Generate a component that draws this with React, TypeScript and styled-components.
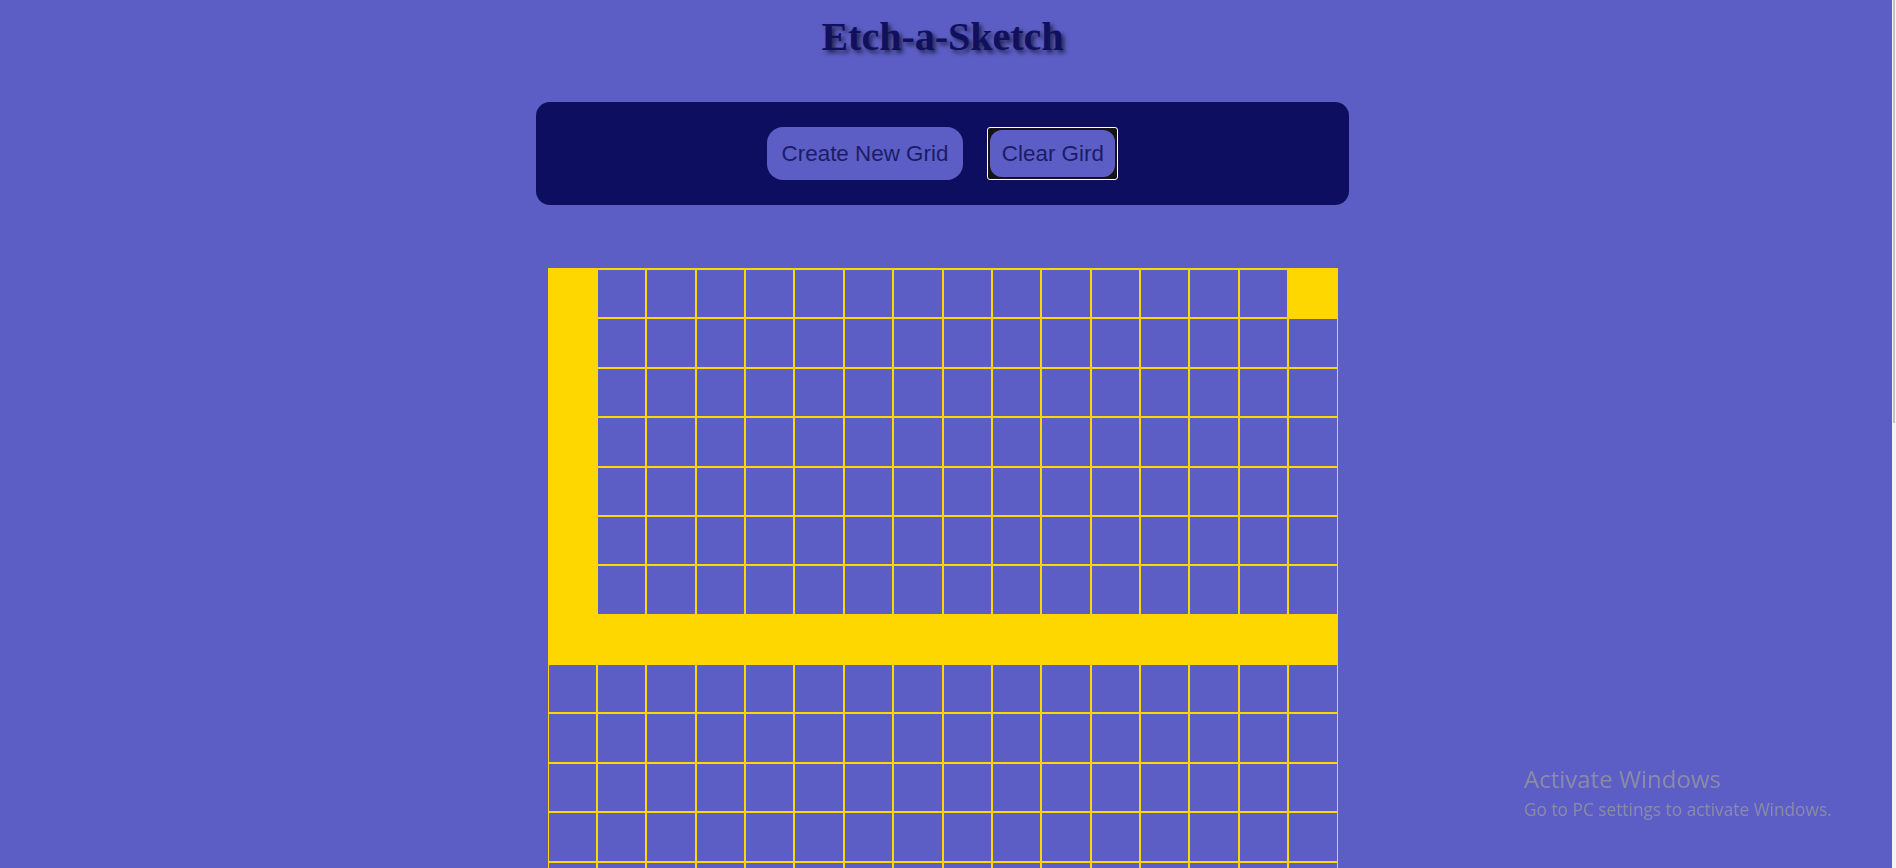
import React from 'react';
import styled, { createGlobalStyle } from 'styled-components';

const GRID_SIZE = 16;

const GlobalStyle = createGlobalStyle`
  html, body {
    margin: 0;
    padding: 0;
    background: #5c5ec6;
    scrollbar-width: none;
  }

  ::-webkit-scrollbar {
    display: none;
  }
`

const Page = styled.div`
  display: flex;
  flex-direction: column;
  align-items: center;
  padding: 13px 11px 0 0;
  min-height: 100vh;
  font-family: "Liberation Sans", Arial, sans-serif;
`

const Title = styled.h1`
  margin: 0 0 41px;
  font-family: "Liberation Serif", "Times New Roman", serif;
  font-size: 40px;
  line-height: 48px;
  font-weight: bold;
  color: #10105e;
  text-shadow: 3px 3px 4px rgba(0, 0, 0, 0.6);
`

const Controls = styled.div`
  display: flex;
  align-items: center;
  justify-content: center;
  gap: 24px;
  width: 813px;
  height: 103px;
  box-sizing: border-box;
  background: #0e0e60;
  border-radius: 14px;
`

const Button = styled.button<{ $compact?: boolean }>`
  border: none;
  margin: 0;
  background: #5c5ec6;
  color: #1c1c66;
  font-family: "Liberation Sans", Arial, sans-serif;
  font-size: 22.4px;
  line-height: 26px;
  padding: ${(p) => (p.$compact ? '10.5px 11.5px' : '13.5px 15px')};
  border-radius: ${(p) => (p.$compact ? '12px' : '16px')};
  cursor: pointer;
  outline: none;
`

const FocusRing = styled.span`
  display: inline-flex;
  padding: 2px;
  background: #141414;
  border: 1px solid #ffffff;
  border-radius: 3px;
`

const Board = styled.div`
  display: grid;
  grid-template-columns: repeat(${GRID_SIZE}, 1fr);
  width: 790px;
  margin-top: 63px;
  border-top: 1px solid #ffd700;
`

const Cell = styled.div<{ $painted: boolean }>`
  aspect-ratio: 1;
  box-sizing: border-box;
  border: 1px solid #ffd700;
  background: ${(p) => (p.$painted ? '#ffd700' : 'transparent')};
`

const Watermark = styled.div`
  position: fixed;
  left: 1524px;
  top: 764px;
  color: #8b8ba6;
  font-family: "Open Sans", "Noto Sans", sans-serif;
  pointer-events: none;
`

const WatermarkTitle = styled.div`
  font-size: 24px;
  line-height: 30px;
`

const WatermarkText = styled.div`
  font-size: 17.3px;
  line-height: 31px;
`

// thin overlay scrollbar at the window's right edge
const ScrollTrack = styled.div`
  position: fixed;
  top: 0;
  right: 0;
  width: 4px;
  height: 100vh;
  background: #f4f4f4;
`

const ScrollThumb = styled.div`
  margin-left: 1px;
  width: 2px;
  height: 423px;
  background: #c2c2c2;
`

const isPainted = (row: number, col: number) =>
  (col === 0 && row <= 7) || row === 7 || (row === 0 && col === GRID_SIZE - 1)

export default function App() {
  const cells = []
  for (let row = 0; row < GRID_SIZE; row++) {
    for (let col = 0; col < GRID_SIZE; col++) {
      cells.push(<Cell key={`${row}-${col}`} $painted={isPainted(row, col)} />)
    }
  }

  return (
    <>
      <GlobalStyle />
      <Page>
        <Title>Etch-a-Sketch</Title>
        <Controls>
          <Button>Create New Grid</Button>
          <FocusRing>
            <Button $compact>Clear Gird</Button>
          </FocusRing>
        </Controls>
        <Board>{cells}</Board>
      </Page>
      <Watermark>
        <WatermarkTitle>Activate Windows</WatermarkTitle>
        <WatermarkText>Go to PC settings to activate Windows.</WatermarkText>
      </Watermark>
      <ScrollTrack>
        <ScrollThumb />
      </ScrollTrack>
    </>
  )
}
